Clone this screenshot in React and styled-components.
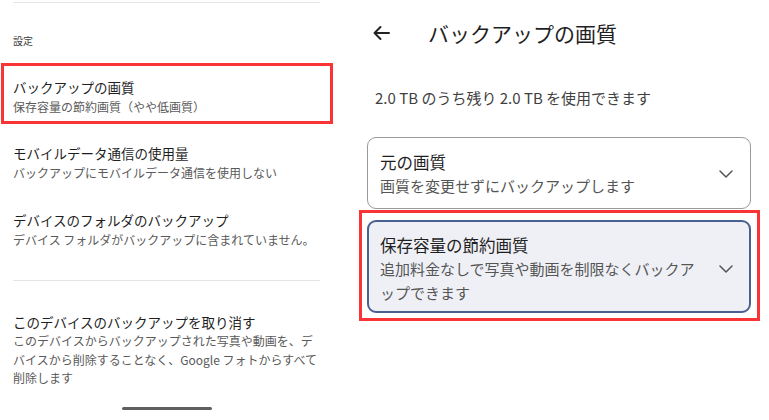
import React from 'react'
import styled, { createGlobalStyle } from 'styled-components'

const GlobalStyle = createGlobalStyle`
  html, body {
    margin: 0;
    padding: 0;
    background: #ffffff;
  }
  body {
    font-family: "Noto Sans CJK JP", "Noto Sans", sans-serif;
    color: #1f1f1f;
  }
`;

const settings = [
  {
    title: 'モバイルデータ通信の使用量',
    sub: ['バックアップにモバイルデータ通信を使用しない'],
    gap: 19,
  },
  {
    title: 'デバイスのフォルダのバックアップ',
    sub: ['デバイス フォルダがバックアップに含まれていません。'],
    gap: 27,
  },
];

const options = [
  {
    title: '元の画質',
    sub: ['画質を変更せずにバックアップします'],
  },
  {
    title: '保存容量の節約画質',
    sub: ['追加料金なしで写真や動画を制限なくバックア', 'ップできます'],
    selected: true,
  },
];

const Chevron = () => (
  <ChevronIcon width="14" height="8" viewBox="0 0 14 8">
    <polyline points="1,1 7,7 13,1" fill="none" stroke="#555" strokeWidth="1.5" strokeLinecap="round" strokeLinejoin="round" />
  </ChevronIcon>
)

const BackArrow = () => (
  <svg width="18" height="16" viewBox="0 0 18 16">
    <path d="M17 8H2.5 M8.5 2 L2.5 8 L8.5 14" fill="none" stroke="#222" strokeWidth="2" strokeLinecap="round" strokeLinejoin="round" />
  </svg>
)

const Option = ({ title, sub, selected }) => {
  const card = (
    <Card selected={selected}>
      <TextCol>
        <OptionTitle>{title}</OptionTitle>
        <OptionSub>
          {sub.map(line => <Line key={line}>{line}</Line>)}
        </OptionSub>
      </TextCol>
      <Chevron />
    </Card>
  )
  return selected ? <RightHighlight>{card}</RightHighlight> : card
}

const App = () => {
  return (
    <>
      <GlobalStyle />
      <Page>
        <LeftPanel>
          <Divider top={2} />
          <SectionLabel>設定</SectionLabel>
          <LeftHighlight>
            <ItemTitle>バックアップの画質</ItemTitle>
            <ItemSub><Line>保存容量の節約画質（やや低画質）</Line></ItemSub>
          </LeftHighlight>
          {settings.map(item => (
            <Item key={item.title} gap={item.gap}>
              <ItemTitle>{item.title}</ItemTitle>
              <ItemSub>
                {item.sub.map(line => <Line key={line}>{line}</Line>)}
              </ItemSub>
            </Item>
          ))}
          <Divider top={30} />
          <Item gap={31}>
            <ItemTitle>このデバイスのバックアップを取り消す</ItemTitle>
            <ItemSub tight>
              <Line>このデバイスからバックアップされた写真や動画を、デ</Line>
              <Line>バイスから削除することなく、Google フォトからすべて</Line>
              <Line>削除します</Line>
            </ItemSub>
          </Item>
          <HomeBar />
        </LeftPanel>

        <RightPanel>
          <Header>
            <BackArrow />
            <HeaderTitle>バックアップの画質</HeaderTitle>
          </Header>
          <Info>2.0 TB のうち残り 2.0 TB を使用できます</Info>
          <Options>
            {options.map(opt => <Option key={opt.title} {...opt} />)}
          </Options>
        </RightPanel>
      </Page>
    </>
  )
}

export default App;


const Page = styled.div`
  display: flex;
  width: 769px;
  height: 420px;
  overflow: hidden;
`;

const LeftPanel = styled.div`
  width: 340px;
  flex-shrink: 0;
  box-sizing: border-box;
  padding: 0 20px 0 13px;
  display: flex;
  flex-direction: column;
`;

const Divider = styled.div`
  height: 1px;
  background: #e4e4e4;
  margin-top: ${({ top }) => top}px;
`;

const SectionLabel = styled.div`
  margin-top: 31px;
  font-size: 10px;
  line-height: 14px;
  color: #3c3c3c;
`;

const LeftHighlight = styled.div`
  margin: 15px -13px 0 -12px;
  border: 3px solid #fa3434;
  padding: 11px 0 4px 9px;
`;

const Item = styled.div`
  margin-top: ${({ gap }) => gap}px;
`;

const ItemTitle = styled.div`
  font-size: 13.5px;
  line-height: 20px;
  color: #1f1f1f;
`;

const ItemSub = styled.div`
  font-size: 12px;
  line-height: ${({ tight }) => (tight ? '18.5px' : '20px')};
  color: #5a5a5a;
`;

const Line = styled.span`
  display: block;
  white-space: nowrap;
`;

const HomeBar = styled.div`
  margin: 19px 0 0 109px;
  width: 90px;
  height: 3px;
  border-radius: 2px;
  background: #5f5f5f;
`;

const RightPanel = styled.div`
  flex: 1;
  box-sizing: border-box;
  padding: 0 18px 0 27px;
  display: flex;
  flex-direction: column;
`;

const Header = styled.div`
  margin-top: 19px;
  padding-left: 5px;
  height: 28px;
  display: flex;
  align-items: center;
  gap: 38px;
`;

const HeaderTitle = styled.div`
  font-size: 21px;
  line-height: 28px;
  color: #1f1f1f;
`;

const Info = styled.div`
  margin-top: 41px;
  padding-left: 8px;
  font-size: 15px;
  line-height: 20px;
  color: #3f3f3f;
`;

const Options = styled.div`
  margin-top: 29px;
  display: flex;
  flex-direction: column;
`;

const Card = styled.div`
  display: flex;
  align-items: center;
  border-radius: 9px;
  border: ${({ selected }) => (selected ? '2px solid #4a6091' : '1px solid #9a9a9a')};
  background: ${({ selected }) => (selected ? '#eff0f6' : '#ffffff')};
  padding: ${({ selected }) => (selected ? '11px 16px 6px 11px' : '12px 17px 10px 12px')};
`;

const TextCol = styled.div`
  flex: 1;
`;

const OptionTitle = styled.div`
  font-size: 16.5px;
  line-height: 24px;
  color: #1f1f1f;
`;

const OptionSub = styled.div`
  font-size: 15px;
  line-height: 24px;
  color: #555555;
`;

const ChevronIcon = styled.svg`
  flex-shrink: 0;
`;

const RightHighlight = styled.div`
  margin: 1px -9px 0 -8px;
  border: 3px solid #fa3434;
  padding: 7px 6px 5px 5px;
`;
